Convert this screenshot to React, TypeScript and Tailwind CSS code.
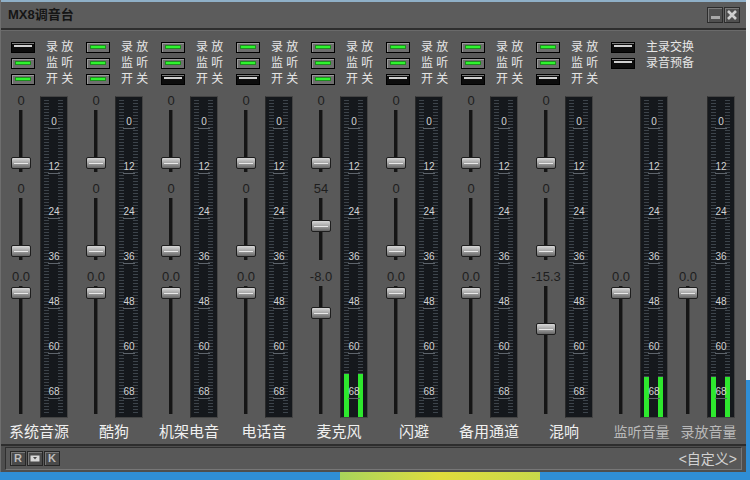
import React from 'react';

type FaderSpec = { value: string; knob: number };

interface Channel {
  name: string;
  leds: [boolean, boolean, boolean];
  faders: [FaderSpec, FaderSpec, FaderSpec];
  level?: number;
}

const channels: Channel[] = [
  { name: '系统音源', leds: [false, true, true], faders: [{ value: '0', knob: 53 }, { value: '0', knob: 53 }, { value: '0.0', knob: 7 }] },
  { name: '酷狗', leds: [true, true, true], faders: [{ value: '0', knob: 53 }, { value: '0', knob: 53 }, { value: '0.0', knob: 7 }] },
  { name: '机架电音', leds: [true, true, false], faders: [{ value: '0', knob: 53 }, { value: '0', knob: 53 }, { value: '0.0', knob: 7 }] },
  { name: '电话音', leds: [true, true, false], faders: [{ value: '0', knob: 53 }, { value: '0', knob: 53 }, { value: '0.0', knob: 7 }] },
  { name: '麦克风', leds: [true, true, true], faders: [{ value: '0', knob: 53 }, { value: '54', knob: 28 }, { value: '-8.0', knob: 27 }], level: 43 },
  { name: '闪避', leds: [true, true, false], faders: [{ value: '0', knob: 53 }, { value: '0', knob: 53 }, { value: '0.0', knob: 7 }] },
  { name: '备用通道', leds: [true, true, false], faders: [{ value: '0', knob: 53 }, { value: '0', knob: 53 }, { value: '0.0', knob: 7 }] },
  { name: '混响', leds: [true, true, false], faders: [{ value: '0', knob: 53 }, { value: '0', knob: 53 }, { value: '-15.3', knob: 43 }] },
];

const ledLabels = ['录 放', '监 听', '开 关'];
const scale = ['0', '12', '24', '36', '48', '60', '68'];

const Led = ({ on }: { on: boolean }) =>
  on ? (
    <div className="w-[24px] h-[11px] border border-black bg-[#6e6e6e] flex items-center justify-center shadow-[inset_1px_1px_0_#9a9a9a]">
      <div className="w-[16px] h-[4px] bg-[#2ef52e] border border-[#1d8f1d]" />
    </div>
  ) : (
    <div className="w-[24px] h-[11px] border border-black bg-[#0d0d0d] flex justify-center pt-[2px] shadow-[inset_0_1px_0_#7a7a7a]">
      <div className="w-[18px] h-[2px] bg-[#cfcfcf]" />
    </div>
  );

const LedRow = ({ on, label }: { on: boolean; label: string }) => (
  <div className="h-[16px] flex items-center pl-[2px] gap-[11px]">
    <Led on={on} />
    <span className="text-[12px] leading-[16px] text-[#e6e6e6] whitespace-pre">{label}</span>
  </div>
);

const Knob = ({ center }: { center: number }) => (
  <div
    className="absolute left-[2px] w-[20px] h-[12px] rounded-[2px] border border-[#1e1e1e] bg-gradient-to-b from-[#d8d8d8] via-[#a4a4a4] to-[#666] flex items-center justify-center"
    style={{ top: center - 6 }}
  >
    <div className="w-[14px] h-[1px] bg-[#e8e8e8]" />
  </div>
);

const Fader = ({ spec, trackClass }: { spec: FaderSpec; trackClass: string }) => (
  <div className="flex flex-col items-center w-[24px]">
    <div className="h-[14px] text-[13px] leading-[14px] text-[#1e1e1e] whitespace-nowrap">{spec.value}</div>
    <div className={`relative mt-[2px] w-[24px] ${trackClass}`}>
      <div className="mx-auto w-[4px] h-full bg-[#151515] border-r border-[#3a3a3a]" />
      <Knob center={spec.knob} />
    </div>
  </div>
);

const Meter = ({ level = 0 }: { level?: number }) => (
  <div className="relative mt-[2px] w-[28px] h-[322px] bg-[#15181c] border border-[#444] border-l-[#2a2a2a]">
    <div className="absolute left-[3px] top-[3px] bottom-[3px] w-[5px] bg-[repeating-linear-gradient(to_bottom,#3d444b_0px,#3d444b_1px,transparent_1px,transparent_3px)]" />
    <div className="absolute right-[4px] top-[3px] bottom-[3px] w-[5px] bg-[repeating-linear-gradient(to_bottom,#3d444b_0px,#3d444b_1px,transparent_1px,transparent_3px)]" />
    {level > 0 && (
      <>
        <div className="absolute left-[3px] bottom-0 w-[5px] bg-[#2ee82e]" style={{ height: level }} />
        <div className="absolute right-[4px] bottom-0 w-[5px] bg-[#2ee82e]" style={{ height: level }} />
      </>
    )}
    <div className="relative flex flex-col items-center pt-[20px] gap-[33px]">
      {scale.map((n) => (
        <div key={n} className="h-[12px] flex flex-col items-center">
          <span className="text-[10px] leading-[10px] text-[#d4d4d4]">{n}</span>
          <div className="mt-[1px] w-[12px] h-[1px] bg-[#5e646b]" />
        </div>
      ))}
    </div>
  </div>
);

const Strip = ({ ch }: { ch: Channel }) => (
  <div className="w-[75px] flex flex-col">
    <div className="flex flex-col">
      {ch.leds.map((on, i) => (
        <LedRow key={i} on={on} label={ledLabels[i]} />
      ))}
    </div>
    <div className="mt-[7px] h-[324px] flex gap-[7px]">
      <div className="flex flex-col">
        <Fader spec={ch.faders[0]} trackClass="h-[62px]" />
        <div className="mt-[10px]">
          <Fader spec={ch.faders[1]} trackClass="h-[62px]" />
        </div>
        <div className="mt-[10px]">
          <Fader spec={ch.faders[2]} trackClass="h-[128px]" />
        </div>
      </div>
      <Meter level={ch.level} />
    </div>
    <div className="mt-[4px] w-[60px] h-[20px] text-center text-[15px] leading-[20px] text-[#f0f0f0] whitespace-nowrap">
      {ch.name}
    </div>
  </div>
);

const MasterPair = ({ label }: { label: string }) => (
  <div className="flex flex-col">
    <div className="h-[324px] flex gap-[7px]">
      <div className="flex flex-col pt-[176px]">
        <Fader spec={{ value: '0.0', knob: 7 }} trackClass="h-[128px]" />
      </div>
      <Meter level={40} />
    </div>
    <div className="mt-[4px] pl-[3px] w-[62px] h-[20px] text-center text-[14px] leading-[20px] text-[#b9b9b9] whitespace-nowrap">
      {label}
    </div>
  </div>
);

const SideButton = ({ children }: { children: React.ReactNode }) => (
  <div className="w-[16px] h-[16px] border border-[#2c2c2c] bg-[#4f4f4f] flex items-center justify-center shadow-[inset_1px_1px_0_#7a7a7a]">
    {children}
  </div>
);

const SmallBtn = ({ children }: { children: React.ReactNode }) => (
  <div className="w-[16px] h-[15px] border border-[#262626] bg-[#4a4a4a] flex items-center justify-center text-[11px] font-bold text-[#bdbdbd] shadow-[inset_1px_1px_0_#777]">
    {children}
  </div>
);

export default function App() {
  return (
    <div className="w-[750px] h-[480px] flex flex-col bg-[#2f8ed6] overflow-hidden font-['Liberation_Sans','Noto_Sans_CJK_SC',sans-serif]">
      <div className="flex">
        <div className="w-[746px] flex flex-col bg-[#595959] border-l border-[#6e6e6e]">
          <div className="h-[2px] bg-[#8fb0c8]" />
          <div className="h-[26px] flex items-center justify-between pl-[7px] pr-[6px] bg-[#5c5c5c]">
            <span className="text-[13px] font-bold text-[#151515]">MX8调音台</span>
            <div className="flex gap-[1px]">
              <SideButton>
                <div className="mt-[5px] w-[9px] h-[3px] bg-[#a8a8a8]" />
              </SideButton>
              <SideButton>
                <svg width="12" height="12" viewBox="0 0 12 12">
                  <path d="M2 2 L10 10 M10 2 L2 10" stroke="#cfcfcf" strokeWidth="2.6" />
                </svg>
              </SideButton>
            </div>
          </div>
          <div className="h-[3px] bg-[#2e2e2e] border-b border-[#6a6a6a]" />

          <div className="h-[413px] flex pl-[8px] pt-[8px]">
            {channels.map((ch) => (
              <Strip key={ch.name} ch={ch} />
            ))}
            <div className="flex flex-col">
              <LedRow on={false} label="主录交换" />
              <LedRow on={false} label="录音预备" />
              <div className="mt-[23px] flex gap-[5px]">
                <MasterPair label="监听音量" />
                <MasterPair label="录放音量" />
              </div>
            </div>
          </div>

          <div className="h-[28px] flex flex-col border-t-2 border-[#2d2d2d] bg-[#4e4e4e]">
            <div className="mx-[4px] mt-[1px] h-[23px] flex items-center justify-between px-[4px] bg-[#585858] border border-[#2f2f2f] border-b-[#777] border-r-[#777]">
              <div className="flex gap-[1px]">
                <SmallBtn>R</SmallBtn>
                <SmallBtn>
                  <svg width="10" height="7" viewBox="0 0 10 7">
                    <rect x="0.5" y="0.5" width="9" height="6" fill="#d8d8d8" />
                    <path d="M3 2 L7 2 L5 4.5 Z" fill="#4a4a4a" />
                  </svg>
                </SmallBtn>
                <SmallBtn>K</SmallBtn>
              </div>
              <span className="text-[14px] leading-[20px] text-[#d2d2d2]">&lt;自定义&gt;</span>
            </div>
          </div>
        </div>
        <div className="flex-1 flex flex-col">
          <div className="h-[380px] bg-[#f4f6f8]" />
          <div className="flex-1 bg-[#2f8ed6]" />
        </div>
      </div>
      <div className="flex-1 flex">
        <div className="w-[340px] bg-[#2f8ed6]" />
        <div className="w-[200px] bg-gradient-to-r from-[#a8d45a] via-[#e0dc3c] to-[#c8d84a]" />
        <div className="flex-1 bg-[#2f8ed6]" />
      </div>
    </div>
  );
}
